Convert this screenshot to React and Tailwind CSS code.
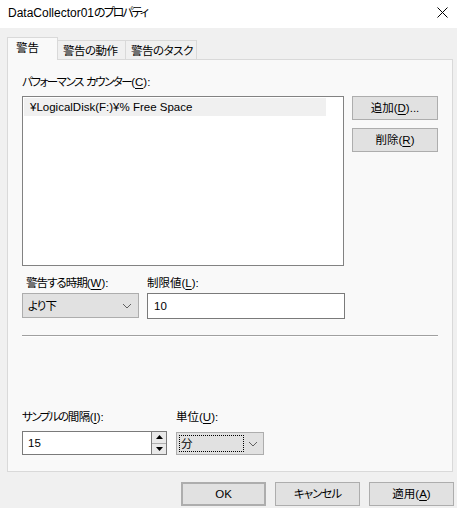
const U = ({ children }) => <span className="underline underline-offset-2">{children}</span>;

const Chevron = () => (
  <svg width="10" height="6" viewBox="0 0 10 6" className="shrink-0">
    <path d="M1 1 L5 5 L9 1" fill="none" stroke="#606060" strokeWidth="1" />
  </svg>
);

const Button = ({ children, className = '' }) => (
  <button
    className={`flex h-[24px] shrink-0 items-center justify-center border border-[#adadad] bg-[#e1e1e1] text-black ${className}`}
  >
    {children}
  </button>
);

// kana in the reference font is much narrower than Noto CJK, so tighten runs of it
const Kana = ({ children, className = 'tracking-[-1.5px]' }) => <span className={className}>{children}</span>;

const App = () => {
  return (
    <div className="flex h-[508px] w-[457px] flex-col overflow-hidden bg-[#f0f0f0] font-['Liberation_Sans','Noto_Sans_CJK_JP',sans-serif] text-[11.5px] leading-[16px] whitespace-pre text-black [font-feature-settings:'palt']">
      {/* title bar */}
      <div className="flex h-[28px] shrink-0 items-center justify-between bg-white pl-[8px] pr-[9px]">
        <span className="-mt-[3px] text-[12px]">
          DataCollector01<Kana className="tracking-[-2px]">のプロパティ</Kana>
        </span>
        <svg width="11" height="11" viewBox="0 0 11 11" className="-mt-[3px]">
          <path d="M0.5 0.5 L10.5 10.5 M10.5 0.5 L0.5 10.5" stroke="#000" strokeWidth="1" />
        </svg>
      </div>

      <div className="flex flex-col px-[7px] pt-[8px]">
        {/* tabs */}
        <div className="relative z-10 flex h-[23px] items-end">
          <div className="-mb-px flex h-[23px] w-[51px] shrink-0 items-start border border-b-0 border-[#d9d9d9] bg-[#f9f9f9] pl-[8px] pt-[2px]">
            警告
          </div>
          <div className="flex h-[19px] w-[68px] shrink-0 items-center border border-l-0 border-b-0 border-[#d9d9d9] pl-[5px] pt-[1px]">
            <Kana className="tracking-[-0.5px]">警告の動作</Kana>
          </div>
          <div className="flex h-[19px] w-[71px] shrink-0 items-center border border-l-0 border-b-0 border-[#d9d9d9] pl-[5px] pt-[1px]">
            <Kana className="tracking-[-0.5px]">警告のタスク</Kana>
          </div>
        </div>

        {/* panel */}
        <div className="flex h-[413px] w-[446px] shrink-0 flex-col border border-[#d9d9d9] bg-[#f9f9f9] pl-[14px]">
          <div className="mt-[14px] h-[16px]">
            <Kana>パフォーマンス</Kana> <Kana>カウンター</Kana>(<U>C</U>):
          </div>
          <div className="mt-[6px] flex">
            <div className="h-[170px] w-[322px] border border-[#828282] bg-white p-[1px]">
              <div className="flex h-[18px] w-[302px] items-center bg-[#f0f0f0] pl-[6px]">
                ¥LogicalDisk(F:)¥% Free Space
              </div>
            </div>
            <div className="ml-[8px] flex flex-col gap-[8px]">
              <Button className="w-[86px]">
                追加(<U>D</U>)...
              </Button>
              <Button className="w-[86px]">
                削除(<U>R</U>)
              </Button>
            </div>
          </div>

          <div className="mt-[9px] flex h-[16px]">
            <div className="w-[125px] pl-[4px]">
              <Kana className="tracking-[-1px]">警告する時期</Kana>(<U>W</U>):
            </div>
            <div>
              制限値(<U>L</U>):
            </div>
          </div>
          <div className="mt-[2px] flex h-[25px] gap-[8px]">
            <div className="flex h-[25px] w-[117px] items-center justify-between border border-[#adadad] bg-[#e1e1e1] pl-[5px] pr-[6px]">
              <Kana className="tracking-[-1px]">より下</Kana>
              <Chevron />
            </div>
            <div className="flex h-[26px] w-[198px] items-center border border-[#7a7a7a] bg-white pl-[6px]">
              10
            </div>
          </div>

          <div className="mt-[17px] w-[416px] border-t border-b border-t-[#a0a0a0] border-b-white" />

          <div className="mt-[72px] flex h-[16px]">
            <div className="w-[154px]">
              <Kana>サンプルの</Kana>
              <Kana className="tracking-[-0.5px]">間隔</Kana>(<U>I</U>):
            </div>
            <div>
              単位(<U>U</U>):
            </div>
          </div>
          <div className="mt-[6px] flex h-[24px] items-start">
            <div className="flex h-[24px] w-[130px] items-center border border-[#7a7a7a] bg-white pl-[5px]">
              15
            </div>
            <div className="flex h-[24px] w-[15px] flex-col border border-l-0 border-[#7a7a7a] bg-white">
              <div className="flex flex-1 items-center justify-center border-b border-[#adadad] bg-[#e9e9e9]">
                <svg width="7" height="4" viewBox="0 0 7 4">
                  <path d="M0 4 L3.5 0 L7 4 Z" fill="#000" />
                </svg>
              </div>
              <div className="flex flex-1 items-center justify-center bg-[#e9e9e9]">
                <svg width="7" height="4" viewBox="0 0 7 4">
                  <path d="M0 0 L3.5 4 L7 0 Z" fill="#000" />
                </svg>
              </div>
            </div>
            <div className="ml-[9px] mt-[1px] flex h-[23px] w-[88px] items-center justify-between border border-[#adadad] bg-[#e1e1e1] pl-[2px] pr-[5px]">
              <div className="flex h-[17px] w-[65px] items-center border border-dotted border-black pl-[1px]">
                分
              </div>
              <Chevron />
            </div>
          </div>
        </div>

        {/* dialog buttons */}
        <div className="mt-[10px] flex gap-[9px] pl-[174px]">
          <Button className="w-[85px] border-2 border-[#0078d7]">OK</Button>
          <Button className="w-[85px]">
            <Kana className="tracking-[-1px]">キャンセル</Kana>
          </Button>
          <Button className="w-[85px]">
            適用(<U>A</U>)
          </Button>
        </div>
      </div>
    </div>
  );
};

export default App;
